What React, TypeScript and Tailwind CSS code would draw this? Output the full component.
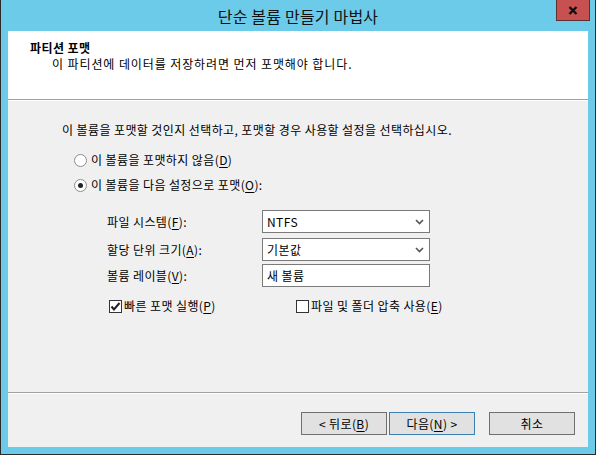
import React from "react";

function U({ children }: { children: React.ReactNode }) {
  return <span className="underline underline-offset-2">{children}</span>;
}

function Radio({ checked }: { checked?: boolean }) {
  return (
    <span className="w-[13px] h-[13px] rounded-full border border-[#8c8c8c] bg-white flex items-center justify-center shrink-0">
      {checked && <span className="w-[5px] h-[5px] rounded-full bg-[#222]" />}
    </span>
  );
}

function Checkbox({ checked }: { checked?: boolean }) {
  return (
    <span className="w-[13px] h-[13px] border border-[#333] bg-white flex items-center justify-center shrink-0">
      {checked && (
        <svg width="11" height="11" viewBox="0 0 11 11">
          <path d="M1.5 5.5 L4 8.5 L9.5 2" fill="none" stroke="#222" strokeWidth="2" />
        </svg>
      )}
    </span>
  );
}

function Combo({ value }: { value: string }) {
  return (
    <div className="w-[168px] h-[23px] border border-[#7a7a7a] bg-white flex items-center pl-[4px] pr-[4px]">
      <span className="flex-1">{value}</span>
      <svg width="9" height="6" viewBox="0 0 9 6" className="mr-[1px]">
        <path d="M1 1 L4.5 4.5 L8 1" fill="none" stroke="#555" strokeWidth="1.6" />
      </svg>
    </div>
  );
}

function Button({ children, primary }: { children: React.ReactNode; primary?: boolean }) {
  return (
    <div
      className={
        "w-[86px] h-[23px] flex items-center justify-center bg-[#e1e1e1] border " +
        (primary ? "border-[#3c7fb1]" : "border-[#707070]")
      }
    >
      {children}
    </div>
  );
}

export default function App() {
  return (
    <div className="w-[596px] h-[455px] bg-[#6ccbe9] border-x border-b border-[#2b2b2b] flex flex-col text-[12px] leading-[16px] tracking-[0.4px] text-black font-['Noto_Sans_CJK_KR',sans-serif]">
      {/* title bar */}
      <div className="relative h-[31px] flex items-center justify-center">
        <span className="text-[16px] leading-[20px] tracking-[0.2px] text-[#111]">단순 볼륨 만들기 마법사</span>
        <div className="absolute right-[5px] top-0 w-[34px] h-[21px] bg-[#c75050] border border-[#5a3030] border-t-0 flex items-center justify-center">
          <svg width="10" height="9" viewBox="0 0 10 9">
            <path d="M1.5 1 L8.5 8 M8.5 1 L1.5 8" stroke="#111" strokeWidth="2.4" />
          </svg>
        </div>
      </div>

      <div className="mx-[7px] h-[416px] bg-[#f0f0f0] flex flex-col">
        {/* header */}
        <div className="h-[68px] bg-white pl-[22px] pt-[9px]">
          <div className="font-bold">파티션 포맷</div>
          <div className="pl-[22px] tracking-[0.9px]">이 파티션에 데이터를 저장하려면 먼저 포맷해야 합니다.</div>
        </div>
        <div className="h-px bg-[#a0a0a0]" />
        <div className="h-px bg-white" />

        {/* body */}
        <div className="flex-1 flex flex-col pl-[54px] pt-[21px]">
          <div>이 볼륨을 포맷할 것인지 선택하고, 포맷할 경우 사용할 설정을 선택하십시오.</div>
          <div className="mt-[14px] ml-[12px] flex items-center gap-[4px]">
            <Radio />
            <span>
              이 볼륨을 포맷하지 않음(<U>D</U>)
            </span>
          </div>
          <div className="mt-[9px] ml-[12px] flex items-center gap-[4px]">
            <Radio checked />
            <span>
              이 볼륨을 다음 설정으로 포맷(<U>O</U>):
            </span>
          </div>

          <div className="mt-[17px] ml-[45px] flex flex-col">
            <div className="flex items-center">
              <span className="w-[155px]">
                파일 시스템(<U>F</U>):
              </span>
              <Combo value="NTFS" />
            </div>
            <div className="mt-[5px] flex items-center">
              <span className="w-[155px]">
                할당 단위 크기(<U>A</U>):
              </span>
              <Combo value="기본값" />
            </div>
            <div className="mt-[3px] flex items-center">
              <span className="w-[155px]">
                볼륨 레이블(<U>V</U>):
              </span>
              <div className="w-[168px] h-[23px] border border-[#7a7a7a] bg-white flex items-center pl-[4px]">
                새 볼륨
              </div>
            </div>
            <div className="mt-[11px] flex items-center">
              <div className="w-[187px] flex items-center gap-[2px] ml-[2px]">
                <Checkbox checked />
                <span>
                  빠른 포맷 실행(<U>P</U>)
                </span>
              </div>
              <div className="flex items-center gap-[2px]">
                <Checkbox />
                <span>
                  파일 및 폴더 압축 사용(<U>E</U>)
                </span>
              </div>
            </div>
          </div>
        </div>

        {/* footer */}
        <div className="h-px bg-[#a0a0a0]" />
        <div className="h-px bg-white" />
        <div className="h-[53px] flex items-start justify-end pr-[13px] pt-[18px]">
          <div className="flex">
            <Button>
              &lt; 뒤로(<U>B</U>)
            </Button>
            <div className="ml-[2px]">
              <Button primary>
                다음(<U>N</U>) &gt;
              </Button>
            </div>
            <div className="ml-[14px]">
              <Button>취소</Button>
            </div>
          </div>
        </div>
      </div>
    </div>
  );
}
